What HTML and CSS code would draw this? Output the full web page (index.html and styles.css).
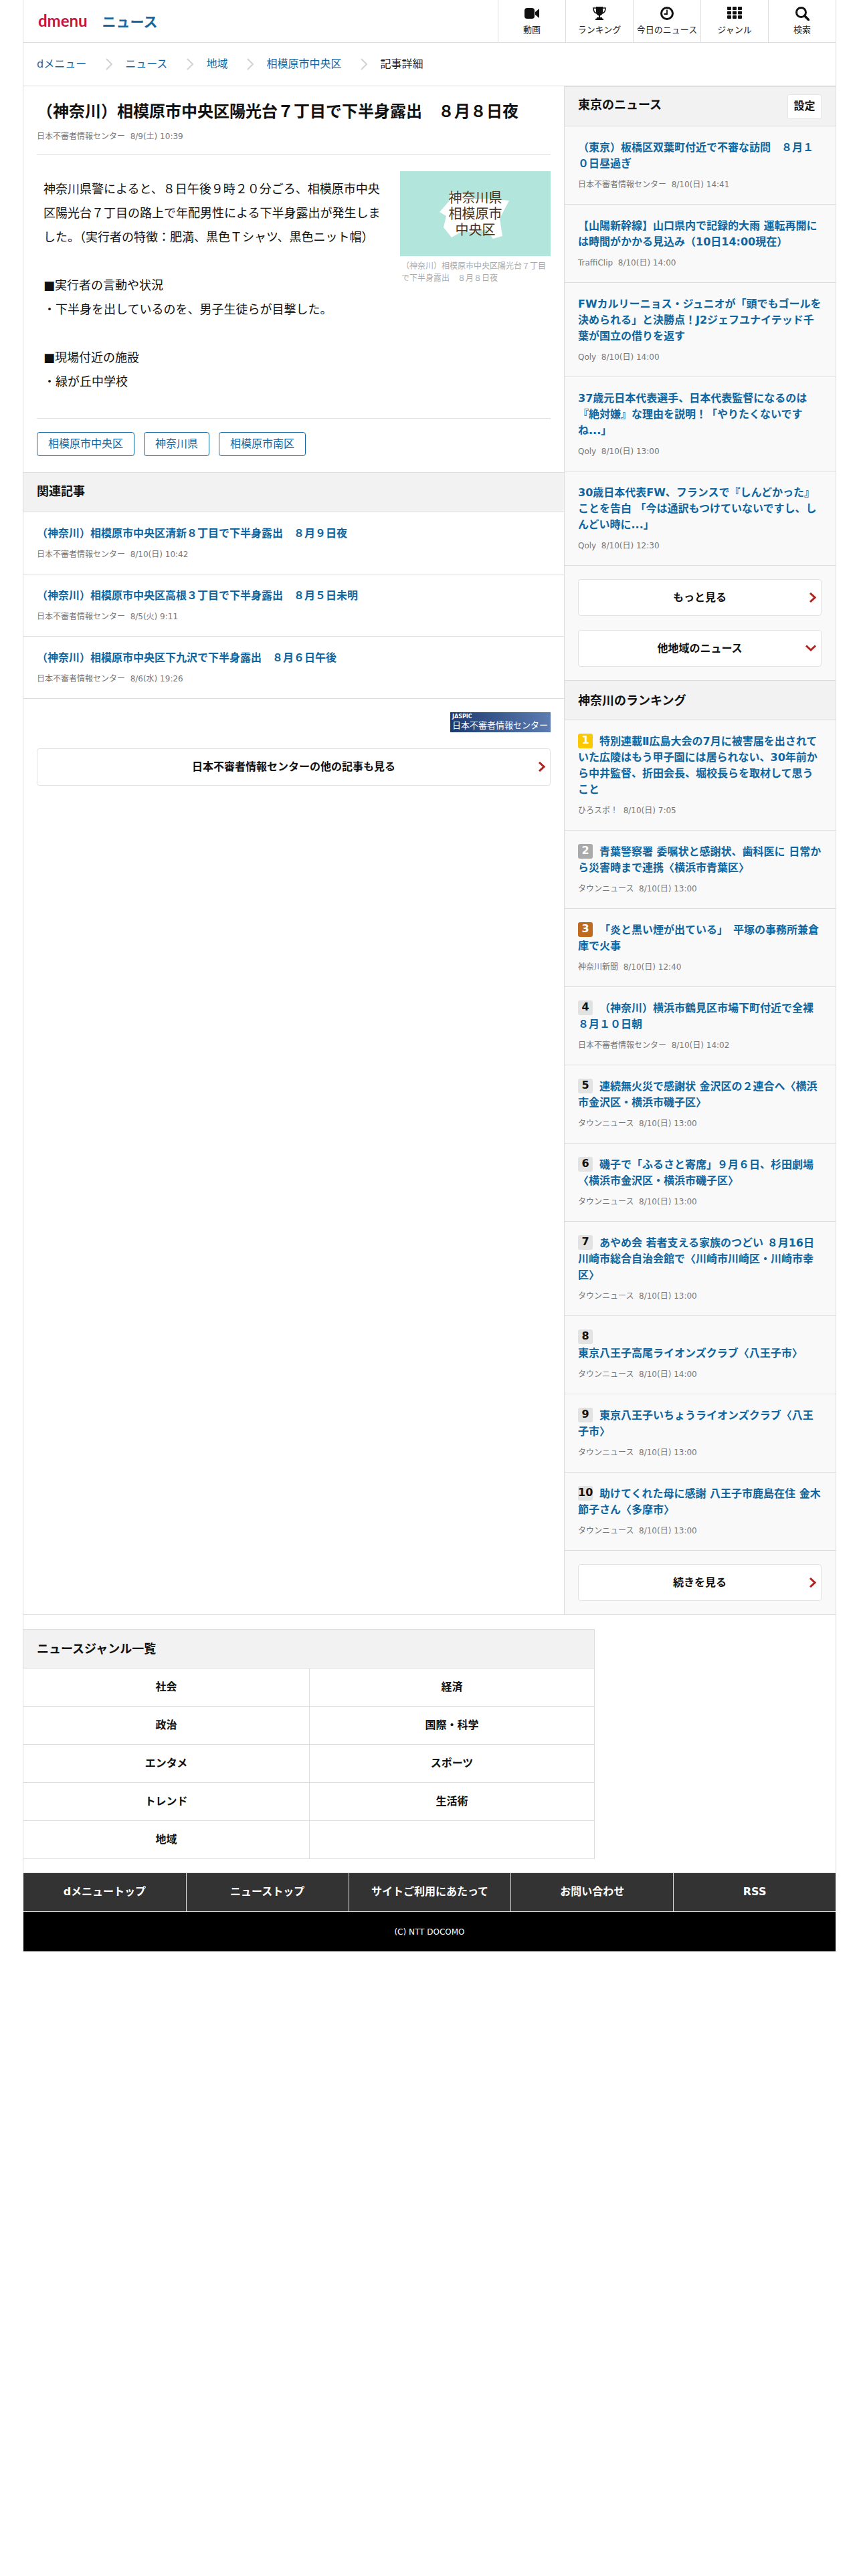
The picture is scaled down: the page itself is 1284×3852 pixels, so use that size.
FILE: index.html
```html
<!DOCTYPE html>
<html lang="ja">
<head>
<meta charset="utf-8">
<title>（神奈川）相模原市中央区陽光台７丁目で下半身露出　８月８日夜</title>
<link rel="stylesheet" href="styles.css">
</head>
<body>
<div class="page">
  <header class="site-header">
    <a class="brand"><span class="brand-d">dmenu</span><span class="brand-news">ニュース</span></a>
    <nav class="top-nav">
      <a class="top-nav-item"><svg class="top-icon" viewBox="0 0 22 22"><rect x="0" y="3" width="15" height="16" rx="4"/><path d="M16 9l6-5v14l-6-5z"/></svg><span>動画</span></a>
      <a class="top-nav-item"><svg class="top-icon" viewBox="0 0 22 22"><path d="M6 1h10v8c0 3-2 5-4 5.500V17h3v1.500l2 .5v2H5v-2l2-.5V17h3v-2.500C8 14 6 12 6 9z"/><path d="M6 3H2c0 4 1 7 5 8M16 3h4c0 4-1 7-5 8" fill="none" stroke="#111" stroke-width="1.600"/></svg><span>ランキング</span></a>
      <a class="top-nav-item"><svg class="top-icon" viewBox="0 0 22 22"><circle cx="11" cy="11" r="8.500" fill="none" stroke="#111" stroke-width="3"/><path d="M11 5.500V12H6.500" fill="none" stroke="#111" stroke-width="1.800"/></svg><span>今日のニュース</span></a>
      <a class="top-nav-item"><svg class="top-icon" viewBox="0 0 22 22"><g><rect x="0" y="1" width="6" height="5" rx="1"/><rect x="8" y="1" width="6" height="5" rx="1"/><rect x="16" y="1" width="6" height="5" rx="1"/><rect x="0" y="7.500" width="6" height="5" rx="1"/><rect x="8" y="7.500" width="6" height="5" rx="1"/><rect x="16" y="7.500" width="6" height="5" rx="1"/><rect x="0" y="14" width="6" height="5" rx="1"/><rect x="8" y="14" width="6" height="5" rx="1"/><rect x="16" y="14" width="6" height="5" rx="1"/></g></svg><span>ジャンル</span></a>
      <a class="top-nav-item"><svg class="top-icon" viewBox="0 0 22 22"><circle cx="9.500" cy="9.500" r="7" fill="none" stroke="#111" stroke-width="3"/><path d="M14.500 14.500L20.500 20.500" stroke="#111" stroke-width="3.600" stroke-linecap="round"/></svg><span>検索</span></a>
    </nav>
  </header>

  <nav class="crumbs">
    <a class="crumb">dメニュー</a>
    <svg class="crumb-sep" viewBox="0 0 10 18"><path d="M1 1l8 8-8 8" fill="none" stroke="#d4d4d4" stroke-width="2.200"/></svg>
    <a class="crumb">ニュース</a>
    <svg class="crumb-sep" viewBox="0 0 10 18"><path d="M1 1l8 8-8 8" fill="none" stroke="#d4d4d4" stroke-width="2.200"/></svg>
    <a class="crumb">地域</a>
    <svg class="crumb-sep" viewBox="0 0 10 18"><path d="M1 1l8 8-8 8" fill="none" stroke="#d4d4d4" stroke-width="2.200"/></svg>
    <a class="crumb">相模原市中央区</a>
    <svg class="crumb-sep" viewBox="0 0 10 18"><path d="M1 1l8 8-8 8" fill="none" stroke="#d4d4d4" stroke-width="2.200"/></svg>
    <span class="crumb-current">記事詳細</span>
  </nav>

  <div class="columns">
    <main class="main-col">
      <article class="article">
        <h1 class="article-title">（神奈川）相模原市中央区陽光台７丁目で下半身露出　８月８日夜</h1>
        <p class="meta article-meta">日本不審者情報センター&nbsp; 8/9(土) 10:39</p>
        <div class="article-body">
          <div class="article-text">
            <p>神奈川県警によると、８日午後９時２０分ごろ、相模原市中央区陽光台７丁目の路上で年配男性による下半身露出が発生しました。（実行者の特徴：肥満、黒色Ｔシャツ、黒色ニット帽）</p>
            <p>■実行者の言動や状況<br>・下半身を出しているのを、男子生徒らが目撃した。</p>
            <p>■現場付近の施設<br>・緑が丘中学校</p>
          </div>
          <figure class="article-figure">
            <div class="figure-image">
              <svg class="figure-map" viewBox="0 0 225 127"><path d="M76 31l25 5 12 6 20-1 30 3-9 17-5 10 4 26-14 4-10-14-16 4-20-1-16 9-12-15 4-17-10-6 8-9 7-8z" fill="#fff"/></svg>
              <div class="figure-label">神奈川県<br>相模原市<br>中央区</div>
            </div>
            <figcaption class="figure-caption">（神奈川）相模原市中央区陽光台７丁目で下半身露出　８月８日夜</figcaption>
          </figure>
        </div>
        <div class="tags">
          <a class="tag">相模原市中央区</a>
          <a class="tag">神奈川県</a>
          <a class="tag">相模原市南区</a>
        </div>
      </article>

      <section class="related">
        <h2 class="section-head section-head-main">関連記事</h2>
        <a class="news-item news-item-main">
          <div class="news-title">（神奈川）相模原市中央区清新８丁目で下半身露出　８月９日夜</div>
          <p class="meta">日本不審者情報センター&nbsp; 8/10(日) 10:42</p>
        </a>
        <a class="news-item news-item-main">
          <div class="news-title">（神奈川）相模原市中央区高根３丁目で下半身露出　８月５日未明</div>
          <p class="meta">日本不審者情報センター&nbsp; 8/5(火) 9:11</p>
        </a>
        <a class="news-item news-item-main">
          <div class="news-title">（神奈川）相模原市中央区下九沢で下半身露出　８月６日午後</div>
          <p class="meta">日本不審者情報センター&nbsp; 8/6(水) 19:26</p>
        </a>
      </section>

      <div class="source">
        <div class="source-logo-row">
          <div class="source-logo"><span class="source-logo-en">JASPIC</span><span class="source-logo-ja">日本不審者情報センター</span></div>
        </div>
        <a class="btn btn-main">日本不審者情報センターの他の記事も見る
          <svg class="btn-chevron" viewBox="0 0 11 15"><path d="M2 1l7 6.500L2 14" fill="none" stroke="#b3211e" stroke-width="3"/></svg>
        </a>
      </div>
    </main>

    <aside class="side-col">
      <div class="section-head section-head-side">
        <h2 class="side-title">東京のニュース</h2>
        <a class="settings">設定</a>
      </div>
      <a class="news-item">
        <div class="news-title">（東京）板橋区双葉町付近で不審な訪問　８月１０日昼過ぎ</div>
        <p class="meta">日本不審者情報センター&nbsp; 8/10(日) 14:41</p>
      </a>
      <a class="news-item">
        <div class="news-title">【山陽新幹線】山口県内で記録的大雨 運転再開には時間がかかる見込み（10日14:00現在）</div>
        <p class="meta">TraffiClip&nbsp; 8/10(日) 14:00</p>
      </a>
      <a class="news-item">
        <div class="news-title">FWカルリーニョス・ジュニオが「頭でもゴールを決められる」と決勝点！J2ジェフユナイテッド千葉が国立の借りを返す</div>
        <p class="meta">Qoly&nbsp; 8/10(日) 14:00</p>
      </a>
      <a class="news-item">
        <div class="news-title">37歳元日本代表選手、日本代表監督になるのは『絶対嫌』な理由を説明！「やりたくないですね...」</div>
        <p class="meta">Qoly&nbsp; 8/10(日) 13:00</p>
      </a>
      <a class="news-item">
        <div class="news-title">30歳日本代表FW、フランスで『しんどかった』ことを告白 「今は通訳もつけていないですし、しんどい時に...」</div>
        <p class="meta">Qoly&nbsp; 8/10(日) 12:30</p>
      </a>
      <div class="side-buttons">
        <a class="btn btn-side">もっと見る
          <svg class="btn-chevron" viewBox="0 0 11 15"><path d="M2 1l7 6.500L2 14" fill="none" stroke="#b3211e" stroke-width="3"/></svg>
        </a>
        <a class="btn btn-side">他地域のニュース
          <svg class="btn-chevron btn-chevron-down" viewBox="0 0 16 10"><path d="M1 1.500l7 6.500 7-6.500" fill="none" stroke="#b3211e" stroke-width="3"/></svg>
        </a>
      </div>

      <h2 class="section-head section-head-side section-head-rank">神奈川のランキング</h2>
      <a class="news-item">
        <div class="news-title"><span class="rank rank-1">1</span>特別連載Ⅱ広島大会の7月に被害届を出されていた広陵はもう甲子園には居られない、30年前から中井監督、折田会長、堀校長らを取材して思うこと</div>
        <p class="meta">ひろスポ！&nbsp; 8/10(日) 7:05</p>
      </a>
      <a class="news-item">
        <div class="news-title"><span class="rank rank-2">2</span>青葉警察署 委嘱状と感謝状、歯科医に 日常から災害時まで連携〈横浜市青葉区〉</div>
        <p class="meta">タウンニュース&nbsp; 8/10(日) 13:00</p>
      </a>
      <a class="news-item">
        <div class="news-title"><span class="rank rank-3">3</span>「炎と黒い煙が出ている」　平塚の事務所兼倉庫で火事</div>
        <p class="meta">神奈川新聞&nbsp; 8/10(日) 12:40</p>
      </a>
      <a class="news-item">
        <div class="news-title"><span class="rank">4</span>（神奈川）横浜市鶴見区市場下町付近で全裸　８月１０日朝</div>
        <p class="meta">日本不審者情報センター&nbsp; 8/10(日) 14:02</p>
      </a>
      <a class="news-item">
        <div class="news-title"><span class="rank">5</span>連続無火災で感謝状 金沢区の２連合へ〈横浜市金沢区・横浜市磯子区〉</div>
        <p class="meta">タウンニュース&nbsp; 8/10(日) 13:00</p>
      </a>
      <a class="news-item">
        <div class="news-title"><span class="rank">6</span>磯子で「ふるさと寄席」９月６日、杉田劇場〈横浜市金沢区・横浜市磯子区〉</div>
        <p class="meta">タウンニュース&nbsp; 8/10(日) 13:00</p>
      </a>
      <a class="news-item">
        <div class="news-title"><span class="rank">7</span>あやめ会 若者支える家族のつどい ８月16日 川崎市総合自治会館で〈川崎市川崎区・川崎市幸区〉</div>
        <p class="meta">タウンニュース&nbsp; 8/10(日) 13:00</p>
      </a>
      <a class="news-item">
        <div class="news-title"><span class="rank">8</span><br>東京八王子高尾ライオンズクラブ〈八王子市〉</div>
        <p class="meta">タウンニュース&nbsp; 8/10(日) 14:00</p>
      </a>
      <a class="news-item">
        <div class="news-title"><span class="rank">9</span>東京八王子いちょうライオンズクラブ〈八王子市〉</div>
        <p class="meta">タウンニュース&nbsp; 8/10(日) 13:00</p>
      </a>
      <a class="news-item">
        <div class="news-title"><span class="rank">10</span>助けてくれた母に感謝 八王子市鹿島在住 金木節子さん〈多摩市〉</div>
        <p class="meta">タウンニュース&nbsp; 8/10(日) 13:00</p>
      </a>
      <div class="side-buttons">
        <a class="btn btn-side">続きを見る
          <svg class="btn-chevron" viewBox="0 0 11 15"><path d="M2 1l7 6.500L2 14" fill="none" stroke="#b3211e" stroke-width="3"/></svg>
        </a>
      </div>
    </aside>
  </div>

  <section class="genres">
    <h2 class="section-head section-head-genre">ニュースジャンル一覧</h2>
    <div class="genre-grid">
      <a class="genre">社会</a>
      <a class="genre">経済</a>
      <a class="genre">政治</a>
      <a class="genre">国際・科学</a>
      <a class="genre">エンタメ</a>
      <a class="genre">スポーツ</a>
      <a class="genre">トレンド</a>
      <a class="genre">生活術</a>
      <a class="genre">地域</a>
      <span class="genre"></span>
    </div>
  </section>
</div>

<footer class="site-footer">
  <nav class="footer-nav">
    <a class="footer-link">dメニュートップ</a>
    <a class="footer-link">ニューストップ</a>
    <a class="footer-link">サイトご利用にあたって</a>
    <a class="footer-link">お問い合わせ</a>
    <a class="footer-link">RSS</a>
  </nav>
  <div class="copyright">(C) NTT DOCOMO</div>
</footer>
</body>
</html>
```

FILE: styles.css
```css
* { box-sizing: border-box; }

body {
  margin: 0;
  background: #fff;
  color: #111;
  font-family: "DejaVu Sans", "Noto Sans CJK JP", sans-serif;
  font-size: 16px;
}

h1, h2, p, figure { margin: 0; }

.page {
  width: 1216px;
  margin: 0 auto;
  padding-bottom: 20px;
  border-left: 1px solid #ddd;
  border-right: 1px solid #ddd;
}

/* header */
.site-header {
  display: flex;
  justify-content: space-between;
  height: 64px;
  border-bottom: 1px solid #ddd;
}

.brand {
  display: flex;
  align-items: center;
  padding: 0 0 2px 22px;
  gap: 22px;
}

.brand-d {
  font-family: "Lato", sans-serif;
  font-weight: 700;
  font-size: 24px;
  line-height: 30px;
  color: #c5163c;
}

.brand-news {
  font-family: "Noto Sans CJK JP", sans-serif;
  font-weight: 700;
  font-size: 21px;
  color: #15669f;
}

.top-nav { display: flex; }

.top-nav-item {
  display: flex;
  flex-direction: column;
  align-items: center;
  width: 101px;
  padding-top: 9px;
  border-left: 1px solid #ddd;
  font-size: 13px;
  line-height: 18px;
  color: #222;
  white-space: nowrap;
}

.top-icon {
  display: block;
  width: 22px;
  height: 22px;
  margin-bottom: 5px;
  fill: #111;
}

/* breadcrumbs */
.crumbs {
  display: flex;
  align-items: center;
  height: 65px;
  padding-left: 20px;
  border-bottom: 1px solid #ddd;
  line-height: 24px;
}

.crumb { color: #15669f; }

.crumb-current { color: #222; }

.crumb-sep {
  width: 10px;
  height: 18px;
  margin: 0 19px 0 29px;
}

/* two columns */
.columns {
  display: grid;
  grid-template-columns: 808px 406px;
  border-bottom: 1px solid #ddd;
}

.main-col { min-width: 0; }

.article { padding: 20px 20px 0; }

.article-title {
  font-size: 24px;
  font-weight: 700;
  line-height: 36px;
  white-space: nowrap;
}

.meta {
  margin-top: 10px;
  font-size: 12px;
  line-height: 18px;
  color: #777;
}

.article-meta {
  padding-bottom: 18px;
  border-bottom: 1px solid #ddd;
}

.article-body {
  display: flex;
  justify-content: space-between;
  padding: 24px 0 36px;
  border-bottom: 1px solid #ddd;
}

.article-text {
  width: 514px;
  margin: 9px 0 0 10px;
  font-size: 18px;
  line-height: 36px;
  color: #111;
}

.article-text p + p { margin-top: 36px; }

.article-figure { width: 225px; }

.figure-image {
  display: grid;
  width: 225px;
  height: 127px;
  background: #b2e5dc;
}

.figure-map,
.figure-label { grid-area: 1 / 1; }

.figure-map {
  display: block;
  width: 225px;
  height: 127px;
}

.figure-label {
  align-self: center;
  font-size: 20px;
  line-height: 24px;
  text-align: center;
  color: #4a3418;
}

.figure-caption {
  margin-top: 6px;
  padding: 0 2px;
  font-size: 12px;
  line-height: 18px;
  color: #aaa;
}

.tags {
  display: flex;
  gap: 14px;
  padding: 20px 0 24px;
}

.tag {
  display: block;
  height: 36px;
  padding: 0 16px;
  border: 1px solid #15669f;
  border-radius: 4px;
  font-size: 16px;
  line-height: 34px;
  color: #15669f;
}

/* section heads */
.section-head {
  background: #f2f2f2;
  border-top: 1px solid #ddd;
  border-bottom: 1px solid #ddd;
  font-size: 18px;
  font-weight: 700;
  color: #111;
}

.section-head-main {
  height: 60px;
  padding-left: 20px;
  line-height: 56px;
}

.section-head-side {
  display: flex;
  align-items: center;
  justify-content: space-between;
  height: 60px;
  padding: 0 21px 0 20px;
}

.section-head-rank { padding-bottom: 3px; }

.side-title { font-size: 18px; line-height: 24px; margin-bottom: 4px; }

.settings {
  display: block;
  width: 51px;
  height: 37px;
  border: 1px solid #e6e6e6;
  border-radius: 3px;
  background: #fff;
  font-size: 16px;
  line-height: 33px;
  font-weight: 700;
  text-align: center;
}

/* news items */
.news-item {
  display: block;
  padding: 20px 21px 20px 20px;
  border-bottom: 1px solid #ddd;
}

.news-item-main { padding-right: 20px; }

.news-title {
  font-size: 16px;
  font-weight: 700;
  line-height: 24px;
  color: #0d66a1;
}

.rank {
  display: inline-block;
  width: 22px;
  height: 22px;
  margin-right: 10px;
  border-radius: 3px;
  background: #e2e2e2;
  font-size: 16px;
  line-height: 20px;
  text-align: center;
  color: #111;
  vertical-align: top;
}

.rank-1 { background: #fcc800; color: #fff; }
.rank-2 { background: #aaa; color: #fff; }
.rank-3 { background: #c06a1e; color: #fff; }

/* buttons */
.btn {
  display: block;
  position: relative;
  height: 55px;
  border: 1px solid #e2e2e2;
  border-radius: 4px;
  background: #fff;
  font-size: 16px;
  font-weight: 700;
  line-height: 53px;
  text-align: center;
  color: #111;
}

.btn-chevron {
  position: absolute;
  top: 19px;
  right: 7px;
  width: 11px;
  height: 15px;
}

.btn-chevron-down {
  top: 21px;
  width: 16px;
  height: 10px;
}

.source { padding: 20px 20px 0; }

.source-logo-row {
  display: flex;
  justify-content: flex-end;
  margin-bottom: 24px;
}

.source-logo {
  display: flex;
  flex-direction: column;
  width: 150px;
  height: 30px;
  padding: 2px 0 0 3px;
  background: linear-gradient(90deg, #1d3a70, #5c7cb2);
  color: #fff;
  white-space: nowrap;
}

.source-logo-en {
  font-size: 8px;
  font-weight: 700;
  line-height: 9px;
}

.source-logo-ja {
  font-size: 13px;
  line-height: 17px;
}

.btn-main { height: 56px; line-height: 54px; }

/* sidebar */
.side-col {
  background: #f9f9f9;
  border-left: 1px solid #ddd;
}

.side-buttons {
  display: flex;
  flex-direction: column;
  gap: 21px;
  padding: 20px 21px 20px 20px;
}

/* genres */
.genres {
  width: 854px;
  margin-top: 21px;
  border-right: 1px solid #ddd;
}

.section-head-genre {
  height: 59px;
  padding-left: 20px;
  line-height: 57px;
}

.genre-grid {
  display: grid;
  grid-template-columns: 427px 426px;
}

.genre {
  display: block;
  height: 57px;
  border-bottom: 1px solid #ddd;
  font-size: 16px;
  font-weight: 700;
  line-height: 56px;
  text-align: center;
}

.genre:nth-child(even) { border-left: 1px solid #ddd; }

/* footer */
.site-footer {
  width: 1214px;
  margin: 0 auto;
}

.footer-nav {
  display: grid;
  grid-template-columns: repeat(5, 1fr);
  height: 59px;
  background: #333;
  border-top: 1px solid #ddd;
  border-bottom: 1px solid #ddd;
}

.footer-link {
  border-left: 1px solid #ddd;
  font-size: 16px;
  font-weight: 700;
  line-height: 56px;
  text-align: center;
  color: #fff;
}

.footer-link:first-child { border-left: 0; }

.copyright {
  height: 59px;
  background: #000;
  font-size: 12px;
  line-height: 60px;
  text-align: center;
  color: #fff;
}
```
